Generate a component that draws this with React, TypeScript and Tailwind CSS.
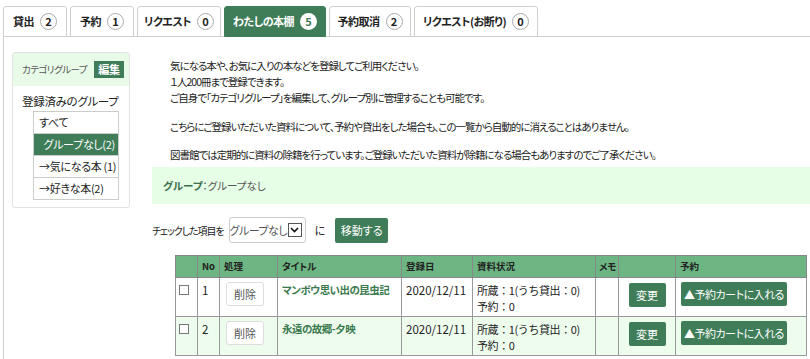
const tabs = [
  { label: "貸出", n: 2, w: "w-[64px]" },
  { label: "予約", n: 1, w: "w-[64px]" },
  { label: "リクエスト", n: 0, w: "w-[84px]" },
  { label: "わたしの本棚", n: 5, w: "w-[102px]", active: true },
  { label: "予約取消", n: 2, w: "w-[82px]" },
  { label: "リクエスト(お断り)", n: 0, w: "w-[124px]" },
];

const groups = [
  { label: "すべて" },
  { label: "グループなし(2)", active: true },
  { label: "→気になる本 (1)" },
  { label: "→好きな本(2)" },
];

const rows = [
  { no: 1, title: "マンボウ思い出の昆虫記", date: "2020/12/11", alt: false },
  { no: 2, title: "永遠の故郷-夕映", date: "2020/12/11", alt: true },
];

const font = "font-['Noto_Sans_CJK_JP','Noto_Sans',sans-serif] [font-feature-settings:'palt']";

export default function App() {
  return (
    <div className={`w-[810px] h-[359px] overflow-hidden bg-white text-[#222] whitespace-nowrap ${font}`}>
      {/* tabs */}
      <div className="flex gap-[3px] pl-[3px] pt-[6px]">
        {tabs.map((t) => (
          <div
            key={t.label}
            className={`${t.w} h-[31px] -mb-px flex items-center justify-center gap-[6px] rounded-t-[3px] border text-[11px] font-bold tracking-[-0.5px] ${
              t.active ? "bg-[#3f7d59] border-[#3f7d59] text-white" : "bg-white border-[#cfcfcf] text-[#222]"
            }`}
          >
            <span>{t.label}</span>
            <span
              className={`w-[17px] h-[17px] rounded-full flex items-center justify-center text-[11px] leading-none tracking-normal ${
                t.active ? "bg-white text-[#3f7d59]" : "border border-[#aaa] bg-white"
              }`}
            >
              {t.n}
            </span>
          </div>
        ))}
      </div>

      <div className="ml-[3px] border-l border-t border-[#cfcfcf] flex h-[330px]">
        {/* sidebar */}
        <div className="ml-[8px] mt-[15px] w-[118px] h-[156px] shrink-0 rounded-[3px] border border-[#e2e2e2]">
          <div className="h-[33px] bg-[#e8fbe8] flex items-center pl-[9px] gap-[7px]">
            <span className="text-[9.5px] text-[#555] tracking-[-0.5px]">カテゴリグループ</span>
            <span className="bg-[#3f7d59] text-white text-[11px] font-bold px-[4px] h-[17px] flex items-center">編集</span>
          </div>
          <div className="pt-[7px] pl-[9px] text-[11.5px]">
            <div className="leading-[16px] mb-[2px] tracking-[-0.3px]">登録済みのグループ</div>
            <div className="ml-[11px] w-[86px] border border-[#ccc] border-b-0">
              {groups.map((g) => (
                <div
                  key={g.label}
                  className={`h-[22px] flex items-center border-b border-[#ccc] text-[11px] tracking-[-0.3px] ${
                    g.active ? "bg-[#3f7d59] text-white justify-end pr-[3px]" : "pl-[5px]"
                  }`}
                >
                  {g.label}
                </div>
              ))}
            </div>
          </div>
        </div>

        {/* main */}
        <div className="ml-[22px] flex-1 min-w-0">
          <div className="pt-[21px] pl-[18px] text-[10.5px] leading-[16px] tracking-[-1px]">
            <p>気になる本や、お気に入りの本などを登録してご利用ください。</p>
            <p>１人200冊まで登録できます。</p>
            <p>ご自身で「カテゴリグループ」を編集して、グループ別に管理することも可能です。</p>
            <p className="mt-[13px]">こちらにご登録いただいた資料について、予約や貸出をした場合も、この一覧から自動的に消えることはありません。</p>
            <p className="mt-[12px]">図書館では定期的に資料の除籍を行っています。ご登録いただいた資料が除籍になる場合もありますのでご了承ください。</p>
          </div>

          <div className="mt-[4px] h-[37px] bg-[#e6fde6] flex items-center pl-[11px] text-[10.5px]">
            <span className="font-bold text-[#3b6e4c]">グループ</span>
            <span className="text-[#555]">：グループなし</span>
          </div>

          <div className="mt-[13px] flex items-center text-[10px]">
            <span className="tracking-[-1.1px]">チェックした項目を</span>
            <div className="ml-[5px] w-[77px] h-[26px] border border-[#ccc] rounded-[3px] flex items-center justify-end pr-[3px] gap-[1px] text-[#555] text-[11px]">
              <span className="tracking-[-0.5px]">グループなし</span>
              <span className="w-[14px] h-[14px] border border-[#555] flex items-center justify-center">
                <svg width="9" height="6" viewBox="0 0 9 6">
                  <path d="M1 1l3.5 3.5L8 1" fill="none" stroke="#111" strokeWidth="1.6" />
                </svg>
              </span>
            </div>
            <span className="ml-[9px] text-[11px]">に</span>
            <button className="ml-[10px] w-[53px] h-[25px] bg-[#3f7d59] text-white text-[11px] rounded-[2px]">移動する</button>
          </div>

          {/* table */}
          <table className="mt-[12px] ml-[23px] w-[631px] border-collapse text-[11.5px] table-fixed">
            <colgroup>
              <col className="w-[22px]" />
              <col className="w-[22px]" />
              <col className="w-[58px]" />
              <col className="w-[124px]" />
              <col className="w-[71px]" />
              <col className="w-[123px]" />
              <col className="w-[23px]" />
              <col className="w-[57px]" />
              <col className="w-[131px]" />
            </colgroup>
            <thead>
              <tr className="bg-[#6db683] h-[22px] text-[9.5px] font-bold text-[#222]">
                <th className="border border-[#888]"></th>
                <th className="border border-[#888] text-left pl-[4px]">No</th>
                <th className="border border-[#888] text-left pl-[4px]">処理</th>
                <th className="border border-[#888] text-left pl-[4px]">タイトル</th>
                <th className="border border-[#888] text-left pl-[4px]">登録日</th>
                <th className="border border-[#888] text-left pl-[4px]">資料状況</th>
                <th className="border border-[#888] text-left pl-[3px]">メモ</th>
                <th className="border border-[#888]"></th>
                <th className="border border-[#888] text-left pl-[4px]">予約</th>
              </tr>
            </thead>
            <tbody>
              {rows.map((r) => (
                <tr key={r.no} className={`h-[39px] align-top ${r.alt ? "bg-[#eefcee]" : "bg-white"}`}>
                  <td className="border border-[#999] pl-[3px] pt-[7px]">
                    <span className="block w-[10px] h-[10px] border border-[#777] bg-white" />
                  </td>
                  <td className="border border-[#999] pl-[4px] pt-[4px]">{r.no}</td>
                  <td className="border border-[#999] pl-[6px] pt-[4px]">
                    <button className="w-[38px] h-[24px] border border-[#ddd] rounded-[3px] bg-white text-[#555] text-[11px]">削除</button>
                  </td>
                  <td className="border border-[#999] pl-[4px] pt-[4px] font-bold text-[#3b7a4f] text-[10.5px] tracking-[-0.5px]">{r.title}</td>
                  <td className="border border-[#999] pl-[4px] pt-[4px]">{r.date}</td>
                  <td className="border border-[#999] pl-[4px] pt-[4px] leading-[16px] text-[11px] tracking-[-0.4px] [font-feature-settings:normal]">
                    <div>所蔵：1(うち貸出：0)</div>
                    <div>予約：0</div>
                  </td>
                  <td className="border border-[#999]"></td>
                  <td className="border border-[#999] pt-[5px] text-center">
                    <button className="w-[37px] h-[24px] bg-[#3f7d59] text-white rounded-[2px] text-[11px]">変更</button>
                  </td>
                  <td className="border border-[#999] pl-[5px] pt-[4px]">
                    <button className="w-[106px] h-[24px] bg-[#3f7d59] text-white rounded-[2px] text-[11px] tracking-[-0.5px]">▲予約カートに入れる</button>
                  </td>
                </tr>
              ))}
            </tbody>
          </table>
        </div>
      </div>
    </div>
  );
}
